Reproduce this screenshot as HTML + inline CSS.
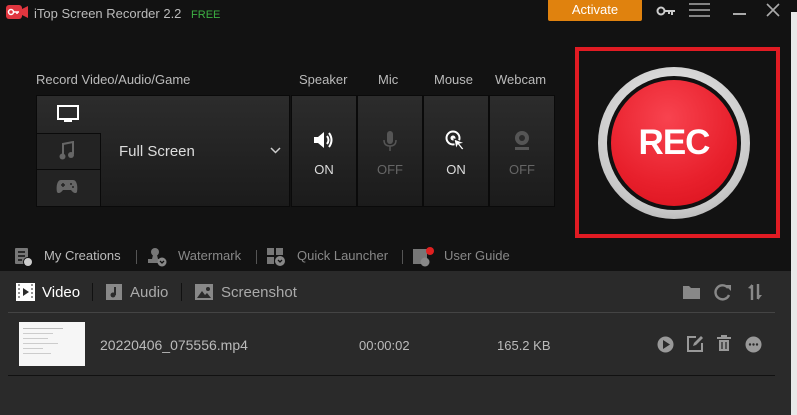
<!DOCTYPE html>
<html><head><meta charset="utf-8"><style>
*{margin:0;padding:0;box-sizing:border-box}
body{width:797px;height:415px;background:#121212;font-family:"Liberation Sans",sans-serif;position:relative;overflow:hidden;color:#ccc}
.a{position:absolute}
.lbl{font-size:13px;color:#bbb}
.btn{position:absolute;top:95px;height:112px;background:linear-gradient(#2c2c2c,#1b1b1b);border:1px solid #0a0a0a}
.btn .t{position:absolute;top:66px;width:100%;text-align:center;font-size:13px}
.btn svg{position:absolute;left:50%;top:34px;transform:translateX(-50%)}
.tb{font-size:13px;color:#888;top:248px}
.sep{position:absolute;width:1px;background:#555}
.ln{margin:4px 4px;height:1px;background:#ccc}
</style></head><body>
<svg class="a" style="left:6px;top:5px" width="22" height="14" viewBox="0 0 22 14"><rect x="0" y="0" width="16" height="14" rx="3" fill="#e0363f"/><path d="M16 4 L22 1 V13 L16 10Z" fill="#e0363f"/><circle cx="5" cy="7" r="2.5" fill="none" stroke="#fff" stroke-width="1.5"/><path d="M7 7 H13 M11 7 V9" stroke="#fff" stroke-width="1.5"/></svg>
<div class="a" style="left:34px;top:6px;font-size:13px;color:#bbb">iTop Screen Recorder 2.2 <span style="color:#3cb043;font-size:11px;margin-left:6px">FREE</span></div>
<div class="a" style="left:548px;top:0;width:94px;height:21px;background:#e0820e;border-radius:0 0 2px 2px;color:#fff;font-size:13px;text-align:center;line-height:19px">Activate</div>
<svg class="a" style="left:656px;top:6px" width="20" height="10"><circle cx="5" cy="5" r="3.5" fill="none" stroke="#ccc" stroke-width="2"/><path d="M9 5H19M16 5V9M13 5V8" stroke="#ccc" stroke-width="2"/></svg>
<svg class="a" style="left:689px;top:3px" width="22" height="14"><path d="M0 1H21M0 7H21M0 13H21" stroke="#aaa" stroke-width="1.6"/></svg>
<div class="a" style="left:733px;top:13px;width:13px;height:1.5px;background:#aaa"></div>
<svg class="a" style="left:766px;top:3px" width="14" height="14"><path d="M1 1L13 13M13 1L1 13" stroke="#aaa" stroke-width="1.6"/></svg>
<div class="a" style="left:791px;top:12px;width:6px;height:403px;background:#e8e8e8"></div>
<div class="a lbl" style="left:36px;top:72px">Record Video/Audio/Game</div>
<div class="a lbl" style="left:299px;top:72px">Speaker</div>
<div class="a lbl" style="left:378px;top:72px">Mic</div>
<div class="a lbl" style="left:434px;top:72px">Mouse</div>
<div class="a lbl" style="left:495px;top:72px">Webcam</div>
<div class="a" style="left:36px;top:95px;width:254px;height:112px;background:linear-gradient(#2c2c2c,#1b1b1b);border:1px solid #0a0a0a"></div>
<div class="a" style="left:36px;top:133px;width:65px;height:74px;background:#232323;border:1px solid #0a0a0a"></div>
<div class="a" style="left:36px;top:169px;width:65px;height:1px;background:#0a0a0a"></div>
<svg class="a" style="left:57px;top:105px" width="22" height="19"><rect x="1" y="1" width="20" height="13" fill="none" stroke="#fff" stroke-width="2"/><rect x="7" y="15" width="8" height="2" fill="#fff"/></svg>
<svg class="a" style="left:59px;top:141px" width="16" height="20"><path d="M4 15V3L14 1V13" stroke="#666" stroke-width="2" fill="none"/><circle cx="3.5" cy="15.5" r="3" fill="#666"/><circle cx="12" cy="14" r="3" fill="#666"/></svg>
<svg class="a" style="left:56px;top:179px" width="22" height="15"><path d="M5 1H17C21 1 22 8 21 13C20 15 17 14 15 11H7C5 14 2 15 1 13C0 8 1 1 5 1Z" fill="#666"/><path d="M5 6H9M7 4V8" stroke="#232323" stroke-width="1.5"/><circle cx="15" cy="5" r="1" fill="#232323"/><circle cx="17" cy="8" r="1" fill="#232323"/></svg>
<div class="a" style="left:119px;top:143px;font-size:15px;color:#ddd">Full Screen</div>
<svg class="a" style="left:270px;top:147px" width="11" height="7"><path d="M1 1L5.5 5.5L10 1" stroke="#ccc" stroke-width="1.5" fill="none"/></svg>
<div class="btn" style="left:291px;width:66px"><svg width="22" height="20" viewBox="0 0 22 20"><path d="M1 7H5L11 2V18L5 13H1Z" fill="#fff"/><path d="M14 6Q17 10 14 14M16 3Q21 10 16 17" stroke="#fff" stroke-width="2" fill="none"/></svg><div class="t" style="color:#ddd">ON</div></div>
<div class="btn" style="left:357px;width:66px"><svg width="16" height="22"><rect x="5" y="1" width="6" height="13" rx="3" fill="#555"/><path d="M2 10Q2 16 8 16Q14 16 14 10M8 16V21" stroke="#555" stroke-width="1.5" fill="none"/></svg><div class="t" style="color:#666">OFF</div></div>
<div class="btn" style="left:423px;width:66px"><svg width="22" height="22"><circle cx="8" cy="8" r="6.5" fill="none" stroke="#fff" stroke-width="2"/><circle cx="8" cy="8" r="2.5" fill="#fff"/><path d="M9 9L20 13L15 14L19 19L17 20L13 15L11 19Z" fill="#fff" stroke="#222" stroke-width="1"/></svg><div class="t" style="color:#ddd">ON</div></div>
<div class="btn" style="left:489px;width:66px"><svg width="20" height="22"><circle cx="10" cy="8" r="7" fill="#555"/><circle cx="10" cy="8" r="3" fill="#2a2a2a"/><path d="M3 20H17V17H3Z" fill="#555"/></svg><div class="t" style="color:#666">OFF</div></div>
<div class="a" style="left:575px;top:47px;width:205px;height:191px;border:4px solid #e11b23"></div>
<div class="a" style="left:598px;top:67px;width:152px;height:152px;border-radius:50%;background:radial-gradient(circle at 50% 40%,#f4f4f4,#c8c8c8 70%,#9a9a9a)"></div>
<div class="a" style="left:607px;top:76px;width:134px;height:134px;border-radius:50%;background:#111"></div>
<div class="a" style="left:611px;top:80px;width:126px;height:126px;border-radius:50%;background:radial-gradient(circle at 45% 30%,#f8434f,#e8202c 60%,#d8101b);color:#fff;font-weight:bold;font-size:35px;letter-spacing:-1px;text-align:center;line-height:126px">REC</div>
<svg class="a" style="left:14px;top:247px" width="20" height="20"><rect x="1" y="1" width="13" height="16" rx="1" fill="#777"/><path d="M4 5H11M4 9H11M4 13H8" stroke="#111" stroke-width="1.5"/><circle cx="14" cy="15" r="5" fill="#111"/><circle cx="14" cy="15" r="4" fill="#ccc"/></svg>
<div class="a" style="left:44px;top:248px;font-size:13px;color:#bbb">My Creations</div>
<div class="sep" style="left:136px;top:250px;height:14px"></div>
<svg class="a" style="left:146px;top:247px" width="22" height="20"><circle cx="9" cy="5" r="4" fill="#777"/><path d="M7 8H11L12 12H6Z M2 12H16V16H2Z" fill="#777"/><circle cx="16" cy="15" r="4.5" fill="#888"/><path d="M14 14L16 16L18 14" stroke="#111" stroke-width="1.3" fill="none"/></svg>
<div class="a tb" style="left:178px">Watermark</div>
<div class="sep" style="left:256px;top:250px;height:14px"></div>
<svg class="a" style="left:266px;top:247px" width="20" height="20"><rect x="1" y="1" width="7" height="7" fill="#777"/><rect x="10" y="1" width="7" height="7" fill="#777"/><rect x="1" y="10" width="7" height="7" fill="#777"/><circle cx="14" cy="14" r="5" fill="#888"/><path d="M12 13L14 15L16 13" stroke="#111" stroke-width="1.3" fill="none"/></svg>
<div class="a tb" style="left:297px">Quick Launcher</div>
<div class="sep" style="left:402px;top:250px;height:14px"></div>
<svg class="a" style="left:412px;top:245px" width="24" height="22"><rect x="1" y="4" width="14" height="15" fill="#777"/><circle cx="18" cy="6" r="4" fill="#e02020"/><circle cx="13" cy="17" r="4.5" fill="#888"/></svg>
<div class="a tb" style="left:444px">User Guide</div>
<div class="a" style="left:0;top:271px;width:791px;height:144px;background:#2a2a2a"></div>
<svg class="a" style="left:16px;top:283px" width="19" height="18"><rect x="0" y="0" width="19" height="18" fill="#fff"/><path d="M3 1V17M16 1V17" stroke="#2a2a2a" stroke-width="1" stroke-dasharray="2 2"/><path d="M7 5L13 9L7 13Z" fill="#2a2a2a"/></svg>
<div class="a" style="left:42px;top:284px;font-size:15px;color:#fff">Video</div>
<div class="sep" style="left:92px;top:283px;height:18px;background:#111"></div>
<svg class="a" style="left:106px;top:284px" width="16" height="16"><rect width="16" height="16" fill="#888"/><path d="M9 3V11" stroke="#2a2a2a" stroke-width="2"/><circle cx="7" cy="11" r="2.5" fill="#2a2a2a"/></svg>
<div class="a" style="left:130px;top:284px;font-size:15px;color:#aaa">Audio</div>
<div class="sep" style="left:181px;top:283px;height:18px;background:#111"></div>
<svg class="a" style="left:195px;top:284px" width="18" height="16"><rect width="18" height="16" fill="#888"/><path d="M2 14L7 7L10 11L12 9L16 14Z" fill="#2a2a2a"/><circle cx="13" cy="5" r="2" fill="#2a2a2a"/></svg>
<div class="a" style="left:221px;top:284px;font-size:15px;color:#aaa">Screenshot</div>
<svg class="a" style="left:682px;top:284px" width="19" height="16"><path d="M1 2H7L9 4H18V15H1Z" fill="#888"/></svg>
<svg class="a" style="left:714px;top:283px" width="18" height="18"><path d="M14 5A7 7 0 1 0 15 12" stroke="#888" stroke-width="2.4" fill="none"/><path d="M11 2H17V8Z" fill="#888"/></svg>
<svg class="a" style="left:746px;top:283px" width="18" height="18"><path d="M6 2V17M12 1V16" stroke="#888" stroke-width="2.4"/><path d="M2 5L6 1L6 6Z M16 12L12 17L12 12Z" fill="#888"/></svg>
<div class="a" style="left:8px;top:312px;width:767px;height:1px;background:#444"></div>
<div class="a" style="left:19px;top:322px;width:66px;height:44px;background:#f6f6f6;padding-top:2px"><div class="ln" style="width:40px;background:#bbb"></div><div class="ln" style="width:30px"></div><div class="ln" style="width:25px"></div><div class="ln" style="width:35px"></div><div class="ln" style="width:20px"></div><div class="ln" style="width:28px"></div></div>
<div class="a" style="left:100px;top:337px;font-size:14px;color:#bbb">20220406_075556.mp4</div>
<div class="a" style="left:359px;top:338px;font-size:13px;color:#bbb">00:00:02</div>
<div class="a" style="left:497px;top:338px;font-size:13px;color:#bbb">165.2 KB</div>
<svg class="a" style="left:657px;top:336px" width="17" height="17"><circle cx="8.5" cy="8.5" r="8" fill="#999"/><path d="M6 4L13 8.5L6 13Z" fill="#2a2a2a"/></svg>
<svg class="a" style="left:687px;top:335px" width="17" height="17"><path d="M9 2H1V16H15V8" stroke="#999" stroke-width="2" fill="none"/><path d="M6 11L7 8L14 1L16 3L9 10Z" fill="#999"/></svg>
<svg class="a" style="left:716px;top:335px" width="16" height="17"><path d="M1 3H15M6 3V1H10V3" stroke="#999" stroke-width="2" fill="none"/><path d="M3 5H13V16H3Z" fill="#999"/><path d="M6 7V14M10 7V14" stroke="#2a2a2a" stroke-width="1.3"/></svg>
<svg class="a" style="left:745px;top:336px" width="17" height="17"><circle cx="8.5" cy="8.5" r="8" fill="#999"/><circle cx="5" cy="8.5" r="1.2" fill="#2a2a2a"/><circle cx="8.5" cy="8.5" r="1.2" fill="#2a2a2a"/><circle cx="12" cy="8.5" r="1.2" fill="#2a2a2a"/></svg>
<div class="a" style="left:8px;top:375px;width:767px;height:1px;background:#111"></div>
</body></html>
